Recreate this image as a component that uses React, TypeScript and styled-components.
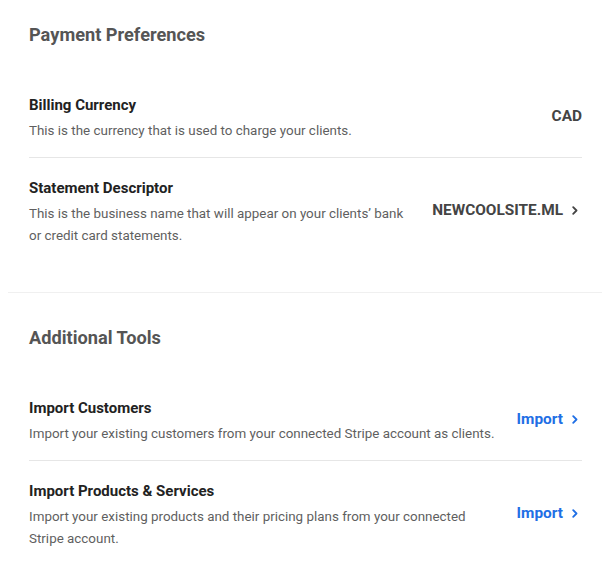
import styled, { createGlobalStyle } from "styled-components";

const GlobalStyle = createGlobalStyle`
  body {
    margin: 8px;
    background: #ffffff;
    font-family: Roboto, "Liberation Sans", Arial, sans-serif;
  }
  * {
    box-sizing: border-box;
  }
`;

// The first block closes with a hairline; the last one sits flush at the bottom
const Section = styled.section<{ $last?: boolean }>`
  padding: 15px 20px ${(props) => (props.$last ? "0" : "30px")} 21px;
  margin-top: ${(props) => (props.$last ? "18px" : "0")};
  border-bottom: ${(props) => (props.$last ? "none" : "1px solid #f0f0f0")};
`;

const SectionTitle = styled.h2`
  margin: 0 0 28px;
  font-size: 18.2px;
  line-height: 24px;
  font-weight: 700;
  color: #555555;
`;

const List = styled.ul`
  list-style: none;
  margin: 0;
  padding: 0;
`;

const Row = styled.li`
  display: flex;
  align-items: center;
  gap: 20px;
  padding: 20px 0 15px;
  & + & {
    border-top: 1px solid #e6e6e6;
  }
`;

const Info = styled.div`
  flex: 1;
  min-width: 0;
`;

const Label = styled.div`
  font-size: 15px;
  line-height: 20px;
  font-weight: 700;
  color: #222222;
`;

const Description = styled.p`
  margin: 5px 0 0;
  font-size: 13.4px;
  line-height: 22px;
  color: #5f5f5f;
`;

const Value = styled.a<{ $link?: boolean }>`
  flex-shrink: 0;
  display: flex;
  align-items: center;
  gap: 9px;
  margin-top: -5px;
  font-size: 15.4px;
  font-weight: 700;
  color: ${(props) => (props.$link ? "#1f6fe5" : "#444444")};
  text-decoration: none;
  cursor: pointer;
  svg {
    margin-right: 4px;
  }
`;

function Chevron() {
  return (
    <svg width="6" height="9" viewBox="0 0 6 9" fill="none">
      <path
        d="M1.2 1.2 L4.5 4.5 L1.2 7.8"
        stroke="currentColor"
        strokeWidth="1.8"
        strokeLinecap="round"
        strokeLinejoin="round"
      />
    </svg>
  );
}

interface Setting {
  label: string;
  description: string;
  value: string;
  link?: boolean;
  arrow?: boolean;
}

const payment: Setting[] = [
  {
    label: "Billing Currency",
    description: "This is the currency that is used to charge your clients.",
    value: "CAD",
  },
  {
    label: "Statement Descriptor",
    description:
      "This is the business name that will appear on your clients’ bank or credit card statements.",
    value: "NEWCOOLSITE.ML",
    arrow: true,
  },
];

const tools: Setting[] = [
  {
    label: "Import Customers",
    description:
      "Import your existing customers from your connected Stripe account as clients.",
    value: "Import",
    link: true,
    arrow: true,
  },
  {
    label: "Import Products & Services",
    description:
      "Import your existing products and their pricing plans from your connected Stripe account.",
    value: "Import",
    link: true,
    arrow: true,
  },
];

function SettingsList({ items }: { items: Setting[] }) {
  return (
    <List>
      {items.map((item) => (
        <Row key={item.label}>
          <Info>
            <Label>{item.label}</Label>
            <Description>{item.description}</Description>
          </Info>
          <Value $link={item.link}>
            {item.value}
            {item.arrow && <Chevron />}
          </Value>
        </Row>
      ))}
    </List>
  );
}

export default function App() {
  return (
    <>
      <GlobalStyle />
      <Section>
        <SectionTitle>Payment Preferences</SectionTitle>
        <SettingsList items={payment} />
      </Section>
      <Section $last>
        <SectionTitle>Additional Tools</SectionTitle>
        <SettingsList items={tools} />
      </Section>
    </>
  );
}
